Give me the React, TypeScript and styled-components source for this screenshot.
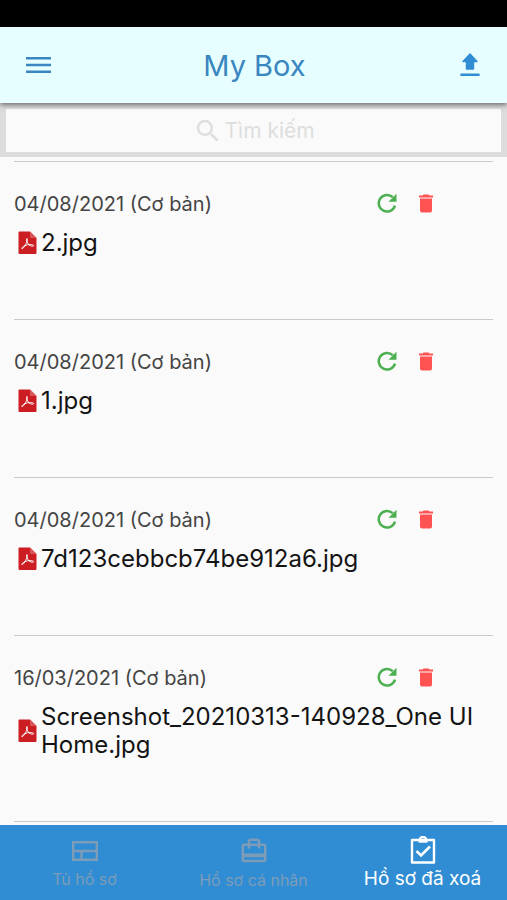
import React from "react";
import styled, { createGlobalStyle } from "styled-components";
import { MdSearch, MdDelete, MdOutlineCardTravel } from "react-icons/md";

const GlobalStyle = createGlobalStyle`
  * { box-sizing: border-box; }
  body {
    margin: 0;
    background: #fafafa;
    font-family: Inter, "Noto Sans", sans-serif;
  }
  button { border: 0; padding: 0; background: none; font: inherit; cursor: pointer; }
`;

const Page = styled.div`
  display: flex;
  flex-direction: column;
  min-height: 100vh;
`;

const StatusBar = styled.div`
  height: 27px;
  background: #000;
`;

const Header = styled.header`
  position: relative;
  display: flex;
  align-items: center;
  justify-content: space-between;
  height: 76px;
  padding: 0 20px;
  background: #e6feff;
  box-shadow: 0 2px 5px rgba(0, 0, 0, 0.5);
`;

const Title = styled.h1`
  margin: 0;
  padding-top: 2px;
  color: #3a86c0;
  font-size: 29px;
  font-weight: 400;
  line-height: 40px;
`;

const IconButton = styled.button<{ $color: string; $size: number }>`
  display: flex;
  align-items: center;
  justify-content: center;
  width: ${(p) => p.$size}px;
  height: ${(p) => p.$size}px;
  color: ${(p) => p.$color};
`;

const SearchBox = styled.label`
  display: flex;
  align-items: center;
  justify-content: center;
  gap: 2px;
  height: 54px;
  border: 6px solid #dcdcdc;
  border-bottom-width: 5px;
  color: #dedede;
`;

const SearchInput = styled.input`
  width: 90px;
  height: 28px;
  padding: 0;
  border: 0;
  outline: 0;
  background: none;
  color: #333;
  font-family: Inter, sans-serif;
  font-size: 21px;
  &::placeholder { color: #dedede; opacity: 1; }
`;

const List = styled.ul`
  flex: 1;
  margin: 0;
  padding: 4px 14px 3px;
  list-style: none;
`;

const Item = styled.li`
  padding: 30px 0 62px;
  border-top: 1px solid #c9c9c9;
  &:last-child { border-bottom: 1px solid #c9c9c9; }
`;

const ItemHead = styled.div`
  display: flex;
  align-items: center;
  justify-content: space-between;
  height: 24px;
  padding-right: 55px;
`;

const DateText = styled.span`
  color: #444;
  font-size: 20px;
  line-height: 24px;
`;

const Actions = styled.div`
  display: flex;
  gap: 15px;
  padding-bottom: 2px;
`;

const FileRow = styled.div`
  display: flex;
  align-items: center;
  gap: 4px;
  margin-top: 13px;
  padding-left: 4px;
`;

const FileName = styled.span`
  flex: 1;
  color: #141414;
  font-size: 24px;
  line-height: 28px;
`;

const Nav = styled.nav`
  display: grid;
  grid-template-columns: repeat(3, 1fr);
  height: 76px;
  background: #308dd4;
`;

const Tab = styled.button<{ $active?: boolean }>`
  display: flex;
  flex-direction: column;
  align-items: center;
  justify-content: center;
  gap: 2px;
  padding-top: 2px;
  color: ${(p) => (p.$active ? "#fff" : "#7c9cb7")};
  font-size: ${(p) => (p.$active ? 19 : 16)}px;
  line-height: ${(p) => (p.$active ? 26 : 24)}px;
  white-space: nowrap;
`;

const MenuIcon = () => (
  <svg width="25" height="18" viewBox="0 0 25 18" stroke="currentColor" strokeWidth="2.600" aria-hidden="true">
    <path d="M0 2.200H25M0 9H25M0 15.800H25" />
  </svg>
);

const UploadIcon = () => (
  <svg width="24" height="24" viewBox="0 0 24 24" fill="currentColor" stroke="currentColor" strokeLinejoin="round" aria-hidden="true">
    <path d="M12 1 19 8.500H15.500V16H8.500V8.500H5Z" strokeWidth="1.400" />
    <path d="M3.500 21.700H20.500" strokeWidth="2.600" strokeLinecap="round" />
  </svg>
);

const RefreshIcon = () => (
  <svg width="20" height="20" viewBox="0 0 20 20" fill="none" aria-hidden="true">
    <path d="M18 12.600A8.300 8.300 0 1 1 15.800 4.200" stroke="currentColor" strokeWidth="2.500" />
    <path d="M19.500 .8V8.800H11.500Z" fill="currentColor" />
  </svg>
);

const PdfIcon = () => (
  <svg width="19" height="24" viewBox="0 0 19 24" aria-hidden="true">
    <path d="M1.500 .5H12L18.500 7V22Q18.500 23 17.500 23H1.500Q.5 23 .5 22V1.500Q.5.5 1.500.5Z" fill="#cc1d22" />
    <path d="M12 .5 18.500 7H13Q12 7 12 6Z" fill="#d9565a" />
    <path d="M9 7.500C7.800 8 9.200 12 11 13.800 12.500 15.200 15.500 15.800 15.600 14.600 15.600 13.200 10 13.200 7 14.600 4.500 15.800 3.200 17.200 4 17.700 5.500 18.200 10.600 9 9 7.500Z" fill="none" stroke="#fff" strokeWidth="1" />
  </svg>
);

const CabinetIcon = () => (
  <svg width="28" height="28" viewBox="0 0 28 28" fill="none" stroke="currentColor" strokeWidth="2.400" aria-hidden="true">
    <path d="M2.200 5.200H25.800V22.800H2.200ZM2.200 14H25.800M10.500 14V22.800" />
  </svg>
);

const ClipboardIcon = () => (
  <svg width="28" height="28" viewBox="0 0 28 28" fill="none" stroke="currentColor" strokeWidth="2.400" strokeLinejoin="round" aria-hidden="true">
    <path d="M3 4H25V26.500H3Z" />
    <path d="M9.500 5.500H18.500" />
    <path d="M11 3.500A3 2.500 0 0 1 17 3.500" />
    <path d="M7.500 15 12 19.500 21 10.500" strokeWidth="2.600" strokeLinejoin="miter" />
  </svg>
);

const files = [
  { date: "04/08/2021 (Cơ bản)", name: "2.jpg" },
  { date: "04/08/2021 (Cơ bản)", name: "1.jpg" },
  { date: "04/08/2021 (Cơ bản)", name: "7d123cebbcb74be912a6.jpg" },
  { date: "16/03/2021 (Cơ bản)", name: "Screenshot_20210313-140928_One UI Home.jpg" },
];

export default function App() {
  return (
    <Page>
      <GlobalStyle />
      <StatusBar />
      <Header>
        <IconButton $color="#3a86c0" $size={36} aria-label="Menu">
          <MenuIcon />
        </IconButton>
        <Title>My Box</Title>
        <IconButton $color="#308dd4" $size={34} aria-label="Upload">
          <UploadIcon />
        </IconButton>
      </Header>
      <SearchBox>
        <MdSearch size={30} aria-hidden="true" />
        <SearchInput type="text" placeholder="Tìm kiếm" aria-label="Tìm kiếm" />
      </SearchBox>
      <List>
        {files.map((file) => (
          <Item key={file.name}>
            <ItemHead>
              <DateText>{file.date}</DateText>
              <Actions>
                <IconButton $color="#4caf50" $size={24} aria-label="Restore">
                  <RefreshIcon />
                </IconButton>
                <IconButton $color="#ff5252" $size={24} aria-label="Delete">
                  <MdDelete size={25} />
                </IconButton>
              </Actions>
            </ItemHead>
            <FileRow>
              <PdfIcon />
              <FileName>{file.name}</FileName>
            </FileRow>
          </Item>
        ))}
      </List>
      <Nav>
        <Tab>
          <CabinetIcon />
          Tủ hồ sơ
        </Tab>
        <Tab>
          <MdOutlineCardTravel size={30} aria-hidden="true" />
          Hồ sơ cá nhân
        </Tab>
        <Tab $active aria-current="page">
          <ClipboardIcon />
          Hồ sơ đã xoá
        </Tab>
      </Nav>
    </Page>
  );
}
